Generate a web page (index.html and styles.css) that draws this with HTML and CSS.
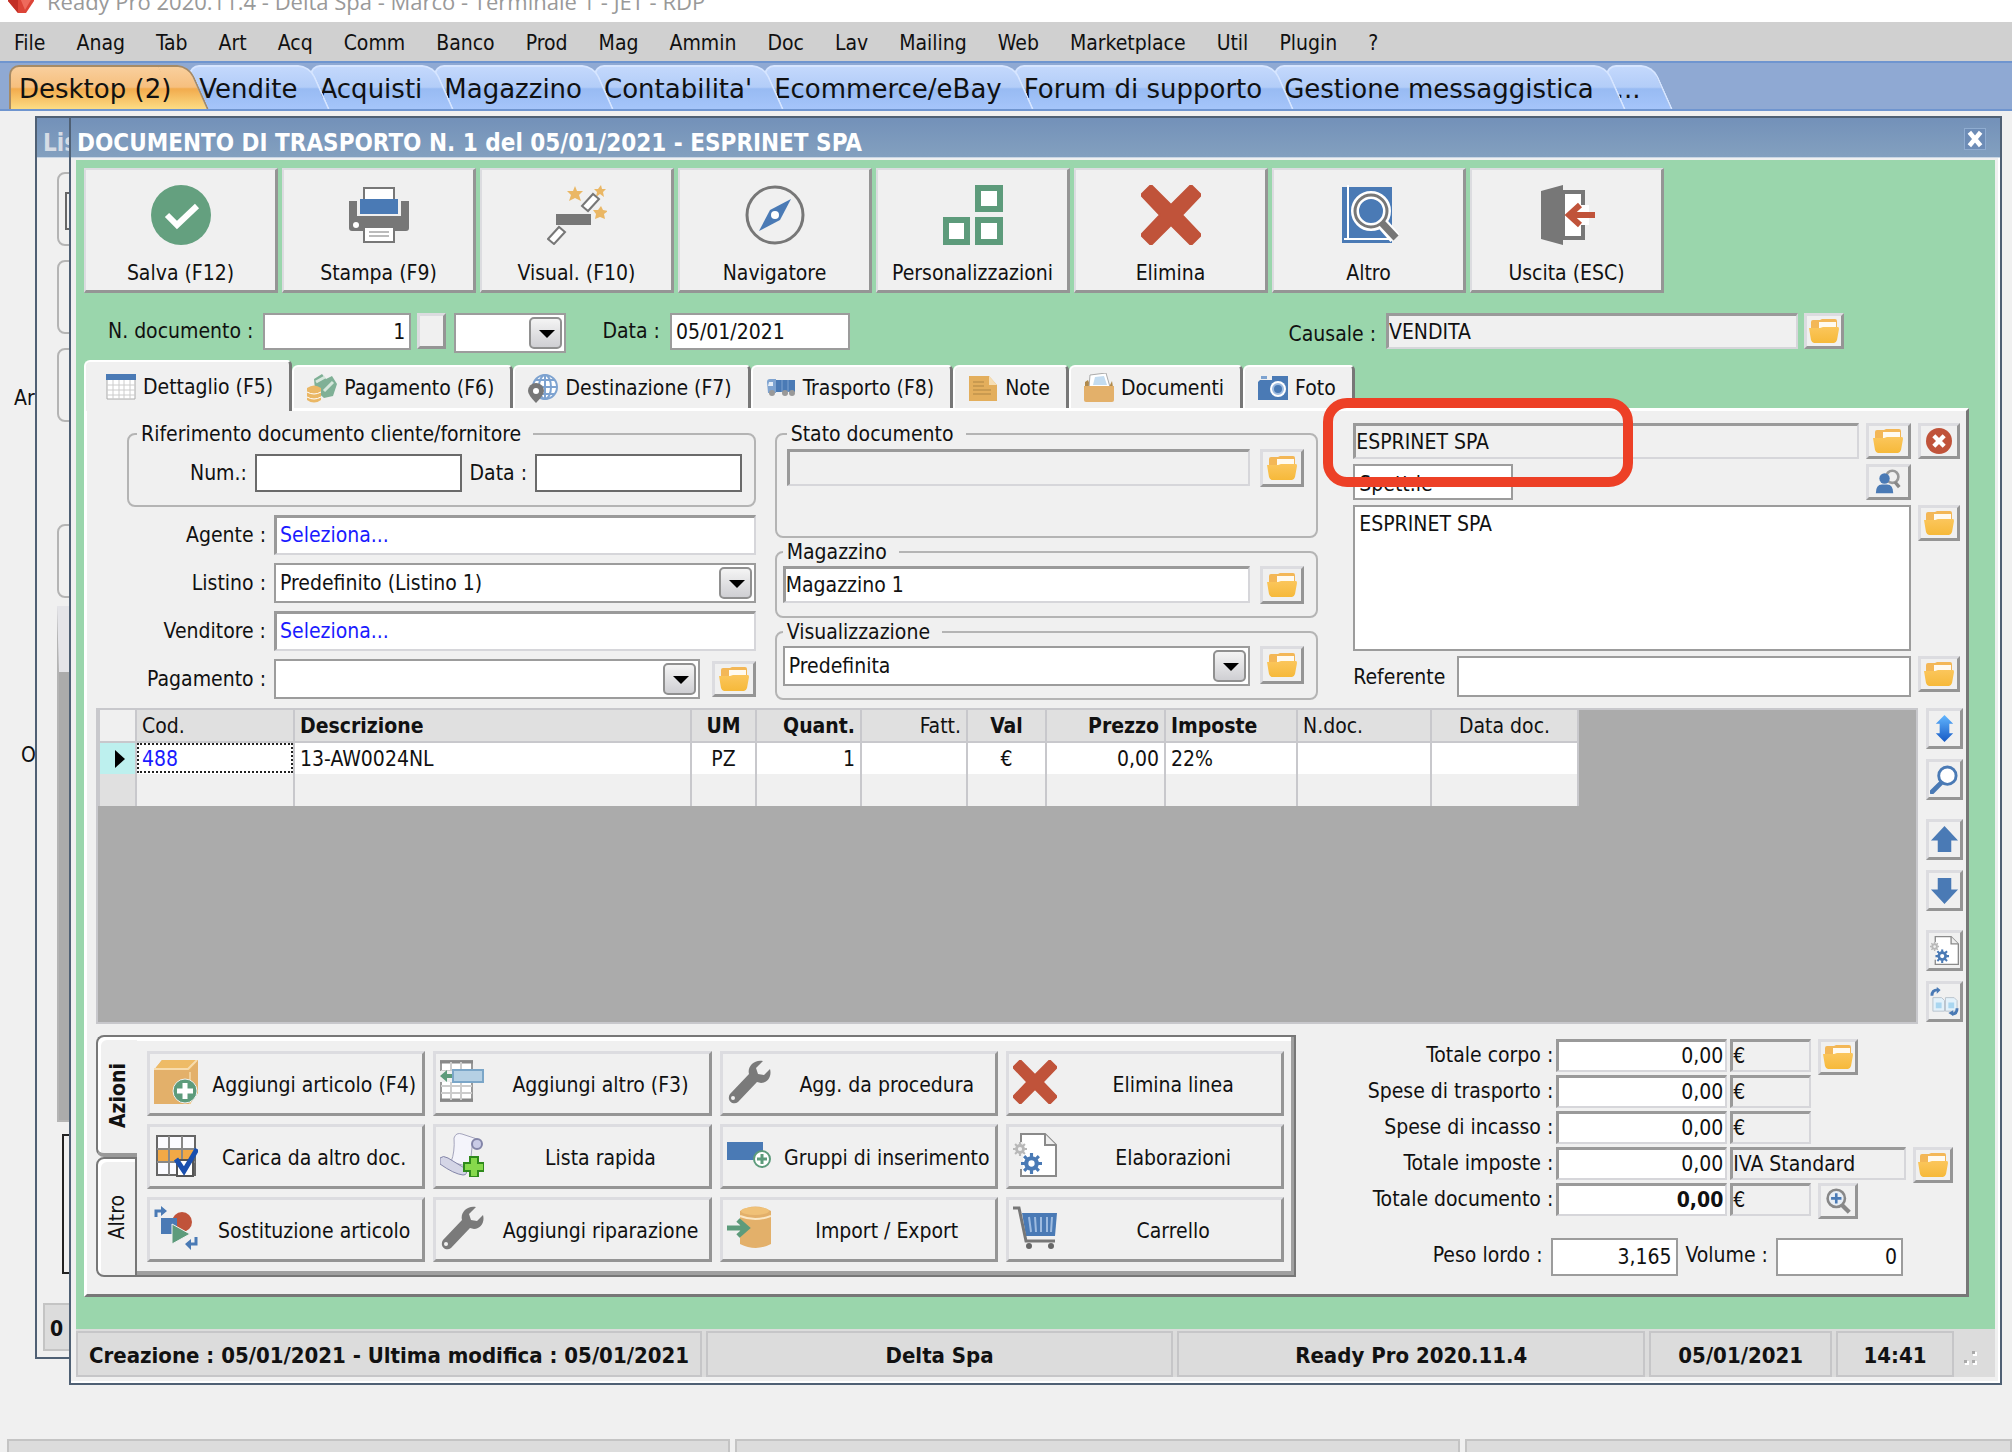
FILE: index.html
```html
<!DOCTYPE html>
<html lang="it">
<head>
    <meta charset="UTF-8">
    <meta name="viewport" content="width=device-width, initial-scale=1.0">
    <title>Ready Pro 2020.11.4</title>
    <link rel="stylesheet" href="styles.css">
</head>
<body>
    <!-- shared icons -->
    <svg class="sprite" aria-hidden="true">
        <defs>
            <linearGradient id="gold" x1="0" y1="0" x2="0" y2="1">
                <stop offset="0" stop-color="#fbc65c"/>
                <stop offset="1" stop-color="#f6b93a"/>
            </linearGradient>
            <linearGradient id="azure" x1="0" y1="0" x2="0" y2="1">
                <stop offset="0" stop-color="#62b6ff"/>
                <stop offset="1" stop-color="#1659c4"/>
            </linearGradient>
        </defs>
        <symbol id="folder" viewBox="0 0 30 24">
            <path d="M2 3q0-2 2-2h7l2-1h13q2 0 2 2v8H2z" fill="#f3b757"/>
            <path d="M10 3h17v8H10z" fill="#fffaf0"/>
            <path d="M0 9h11l3-1h15q1 0 1 2l-2 11q-1 3-3 3H5q-2 0-3-3z" fill="url(#gold)"/>
        </symbol>
        <symbol id="cross" viewBox="0 0 60 60">
            <path d="M10 0L30 20 50 0 60 10 41 30 60 50 50 60 30 40 10 60 0 50 19 30 0 10z" fill="#c0533a" stroke="#c0533a" stroke-width="2" stroke-linejoin="round"/>
        </symbol>
        <symbol id="wrench" viewBox="0 0 44 44">
            <path d="M36 1l-7 7 2 6 6 1 6-6c2 7-2 14-9 14l-4-1L11 42c-5 4-12-2-8-8l19-20C20 7 27-1 36 1z" fill="#7a7a7a"/>
            <circle cx="6" cy="38" r="2" fill="#f0f0f0"/>
        </symbol>
        <symbol id="gear" viewBox="0 0 20 20">
            <circle cx="10" cy="10" r="5" fill="none" stroke="currentColor" stroke-width="4"/>
            <path d="M10 0v4M10 16v4M0 10h4M16 10h4M3 3l3 3M14 14l3 3M17 3l-3 3M6 14l-3 3" stroke="currentColor" stroke-width="3"/>
        </symbol>
        <symbol id="gearpage" viewBox="0 0 44 44">
            <path d="M8 1h24l11 11v31H8z" fill="#fff" stroke="#8a8a8a" stroke-width="2"/>
            <path d="M32 1v11h11" fill="#eee" stroke="#8a8a8a" stroke-width="2"/>
            <path d="M0 9h10v27H0z" fill="#f0f0f0"/>
            <use href="#gear" x="0" y="9" width="14" height="14" color="#b8b8b8"/>
            <use href="#gear" x="8" y="20" width="21" height="21" color="#4a7ab5"/>
        </symbol>
        <symbol id="lens" viewBox="0 0 30 30">
            <path d="M2 28l10-10" stroke="#4a7ab5" stroke-width="5" stroke-linecap="round"/>
            <circle cx="18" cy="11" r="9" fill="#fff" stroke="#4a7ab5" stroke-width="3"/>
        </symbol>
        <symbol id="arrow" viewBox="0 0 30 30">
            <path d="M15 1l14 15h-7v12H8V16H1z" fill="#4a7ab5"/>
        </symbol>
    </svg>

    <header class="titlebar">
        <svg class="gem" viewBox="0 0 28 28"><path d="M1 2h26v13L19 27h-8L1 15z" fill="#dc4437"/><path d="M1 2h10v25L1 15z" fill="#c22f26"/><path d="M13 12h12l-7 12z" fill="#ee6a5c"/></svg>
        <span>Ready Pro 2020.11.4 - Delta Spa - Marco - Terminale 1 - JET - RDP</span>
    </header>

    <nav class="menu">
        <a href="#">File</a><a href="#">Anag</a><a href="#">Tab</a><a href="#">Art</a><a href="#">Acq</a><a href="#">Comm</a><a href="#">Banco</a><a href="#">Prod</a><a href="#">Mag</a><a href="#">Ammin</a><a href="#">Doc</a><a href="#">Lav</a><a href="#">Mailing</a><a href="#">Web</a><a href="#">Marketplace</a><a href="#">Util</a><a href="#">Plugin</a><a href="#">?</a>
    </nav>

    <nav class="areas">
        <a class="active" href="#"><span>Desktop (2)</span></a>
        <a href="#"><span>Vendite</span></a>
        <a href="#"><span>Acquisti</span></a>
        <a href="#"><span>Magazzino</span></a>
        <a href="#"><span>Contabilita'</span></a>
        <a href="#"><span>Ecommerce/eBay</span></a>
        <a href="#"><span>Forum di supporto</span></a>
        <a href="#"><span>Gestione messaggistica</span></a>
        <a href="#"><span>...</span></a>
    </nav>

    <main class="desktop">
        <span class="behind behind-top">Ar</span>
        <span class="behind behind-low">O</span>

        <!-- list window, mostly covered -->
        <section class="window back">
            <h2 class="caption">Lis</h2>
            <div class="back-body">
                <div class="group"><i></i></div>
                <div class="group"></div>
                <div class="group last"></div>
                <div class="group"></div>
                <div class="back-grid"></div>
                <div class="back-box"></div>
            </div>
            <div class="back-status">0</div>
        </section>

        <section class="window front">
            <header class="caption">
                <h1>DOCUMENTO DI TRASPORTO N. 1 del 05/01/2021 - ESPRINET SPA</h1>
                <button class="close" type="button" aria-label="Chiudi"><svg viewBox="0 0 16 16"><path d="M3 2l10 12M13 2L3 14" stroke="#fff" stroke-width="4"/></svg></button>
            </header>

            <form class="content">
                <div class="toolbar">
                    <button type="button">
                        <svg viewBox="0 0 60 60"><circle cx="30" cy="30" r="30" fill="#64a07f"/><path d="M16 30l10 10 20-19" fill="none" stroke="#fff" stroke-width="6"/></svg>
                        <span>Salva (F12)</span>
                    </button>
                    <button type="button">
                        <svg viewBox="0 0 60 60"><path d="M0 16h60v27q0 3-3 3H3q-3 0-3-3z" fill="#777"/><path d="M15 3h30v20H15z" fill="#fff" stroke="#777" stroke-width="2"/><path d="M8 14h44v17H8z" fill="#f0f0f0"/><path d="M15 3h30v14H15z" fill="#fff" stroke="#777" stroke-width="2"/><path d="M11 14h38v15H11z" fill="#4a7ab5"/><circle cx="7" cy="40" r="3" fill="#fff"/><path d="M15 42h30v15H15z" fill="#fff" stroke="#777" stroke-width="2"/><path d="M20 47h20M20 51h20" stroke="#bbb" stroke-width="2"/></svg>
                        <span>Stampa (F9)</span>
                    </button>
                    <button type="button">
                        <svg viewBox="0 0 60 60"><path d="M28 1l2 5 6 0-4 4 2 6-6-3-6 3 2-6-4-4 6 0zM54 0l1 4 4 0-3 3 1 5-4-3-4 3 1-5-3-3 4 0zM54 21l2 4 5 1-4 3 1 5-5-2-5 2 1-5-3-4 5 0z" fill="#eab765"/><path d="M9 29h35v11H9z" fill="#777"/><path d="M35 21l11-12 6 5-11 12zM1 54l11-12 6 5L7 59z" fill="#fff" stroke="#777" stroke-width="2"/></svg>
                        <span>Visual. (F10)</span>
                    </button>
                    <button type="button">
                        <svg viewBox="0 0 60 60"><circle cx="30" cy="30" r="28" fill="#f0f0f0" stroke="#777" stroke-width="3"/><path d="M46 14L35 35 14 46 25 25z" fill="#4a7ab5"/><circle cx="30" cy="30" r="4" fill="#fff"/></svg>
                        <span>Navigatore</span>
                    </button>
                    <button type="button">
                        <svg viewBox="0 0 60 60"><path d="M35 3h22v21H35zM3 35h21v22H3zM35 35h22v22H35z" fill="#fff" stroke="#5d9b7b" stroke-width="6"/></svg>
                        <span>Personalizzazioni</span>
                    </button>
                    <button type="button">
                        <svg><use href="#cross"/></svg>
                        <span>Elimina</span>
                    </button>
                    <button type="button">
                        <svg viewBox="0 0 60 60"><path d="M3 2h50v56H3z" fill="#4a7ab5"/><path d="M9 0v53M5 54h45" stroke="#fff" stroke-width="2"/><path d="M42 37l14 16" stroke="#fff" stroke-width="12"/><circle cx="32" cy="26" r="16" fill="#4a7ab5" stroke="#fff" stroke-width="8"/><circle cx="32" cy="26" r="16" fill="none" stroke="#777" stroke-width="3"/><path d="M43 38l14 15" stroke="#777" stroke-width="7"/></svg>
                        <span>Altro</span>
                    </button>
                    <button type="button">
                        <svg viewBox="0 0 60 60"><path d="M26 7h20v46H26z" fill="#fff" stroke="#777" stroke-width="4"/><path d="M4 6L26 0v60L4 54z" fill="#777"/><path d="M42 20h10v20H42z" fill="#fff"/><path d="M32 30h26M43 20L32 30l11 10" fill="none" stroke="#c0533a" stroke-width="6"/></svg>
                        <span>Uscita (ESC)</span>
                    </button>
                </div>

                <div class="docline">
                    <label for="numdoc">N. documento :</label>
                    <input class="plain num" id="numdoc" value="1">
                    <button class="raised blank" type="button" aria-label="Numero"></button>
                    <div class="combo serie"><select aria-label="Serie"><option></option></select></div>
                    <label for="datadoc">Data :</label>
                    <input class="plain date" id="datadoc" value="05/01/2021">
                    <label class="causale-label" for="causale">Causale :</label>
                    <input class="sunken gray causale" id="causale" value="VENDITA">
                    <button class="raised folder" type="button" aria-label="Apri causale"><svg><use href="#folder"/></svg></button>
                </div>

                <nav class="doctabs">
                    <a class="active" href="#"><svg viewBox="0 0 30 26"><path d="M1 1h28v24H1z" fill="#fff" stroke="#aaa"/><path d="M0 0h30v6H0z" fill="#4a7ab5"/><path d="M7 6v19M13 6v19M18 6v19M24 6v19M1 11h28M1 16h28M1 21h28" stroke="#ccc"/></svg>Dettaglio (F5)</a>
                    <a href="#"><svg viewBox="0 0 30 30"><path d="M7 6l8-5 4 5 6-3 5 8-4 12-9 2-9-8z" fill="#7fb096"/><path d="M9 9l9-5M17 18l9-9" stroke="#d5e7dc" stroke-width="3"/><path d="M0 15q7-5 14 0v12q-7 5-14 0z" fill="#eab765"/><path d="M0 19q7 4 14 0M0 24q7 4 14 0" stroke="#fff" fill="none"/></svg>Pagamento (F6)</a>
                    <a href="#"><svg viewBox="0 0 30 30"><circle cx="17" cy="14" r="12" fill="#fff" stroke="#7ea3d0" stroke-width="2"/><path d="M17 2v24M5 14h24M8 7h18M8 21h18" stroke="#7ea3d0" stroke-width="2"/><ellipse cx="17" cy="14" rx="6" ry="12" fill="none" stroke="#7ea3d0" stroke-width="2"/><path d="M0 18a8 8 0 0 1 16 0q0 4-8 12-8-8-8-12z" fill="#777"/><circle cx="8" cy="18" r="3" fill="#fff"/></svg>Destinazione (F7)</a>
                    <a href="#"><svg viewBox="0 0 30 30"><path d="M10 7h19v12H10z" fill="#4a7ab5"/><path d="M1 9q0-3 3-3h6v14H2z" fill="#7ea3d0"/><path d="M3 9h4v4H2z" fill="#e4edf7"/><path d="M16 7v12M22 7v12" stroke="#7ea3d0"/><circle cx="6" cy="20" r="3" fill="#999"/><circle cx="19" cy="20" r="3" fill="#999"/><circle cx="26" cy="20" r="3" fill="#999"/></svg>Trasporto (F8)</a>
                    <a href="#"><svg viewBox="0 0 30 30"><path d="M1 3h20l8 9v16H1z" fill="#e3ae5c"/><path d="M21 3v9h8" fill="#f6deb4"/><path d="M5 9h11M5 13h11M5 17h18M5 21h18" stroke="#c99a50" stroke-width="2"/></svg>Note</a>
                    <a href="#"><svg viewBox="0 0 30 30"><path d="M1 9l3-2 2 5h20l2-4 1 6H1z" fill="#b08a4c"/><path d="M6 2l16-2 4 14H5z" fill="#fff" stroke="#aaa"/><path d="M11 4l9-1 3 9H9z" fill="#c3dcf0"/><path d="M0 13h30v14q0 2-2 2H2q-2 0-2-2z" fill="#e3b06a"/></svg>Documenti</a>
                    <a href="#"><svg viewBox="0 0 30 30"><path d="M2 7h12V3h16v24H0V9z" fill="#4a7ab5"/><path d="M3 3h6v3H3z" fill="#7ea3d0"/><circle cx="20" cy="16" r="8" fill="#fff"/><circle cx="20" cy="16" r="5" fill="#4a7ab5" stroke="#9dbbe0" stroke-width="2"/></svg>Foto</a>
                </nav>

                <div class="panel">
                    <div class="columns">
                        <div class="refs">
                            <fieldset>
                                <legend>Riferimento documento cliente/fornitore</legend>
                                <div class="refline">
                                    <label for="refnum">Num.:</label>
                                    <input class="plain dark" id="refnum">
                                    <label for="refdata">Data :</label>
                                    <input class="plain dark" id="refdata">
                                </div>
                            </fieldset>
                            <div class="row">
                                <label for="agente">Agente :</label>
                                <input class="sunken pick" id="agente" value="Seleziona...">
                            </div>
                            <div class="row">
                                <label for="listino">Listino :</label>
                                <div class="combo"><select id="listino"><option>Predefinito (Listino 1)</option></select></div>
                            </div>
                            <div class="row">
                                <label for="venditore">Venditore :</label>
                                <input class="sunken pick" id="venditore" value="Seleziona...">
                            </div>
                            <div class="row">
                                <label for="pagamento">Pagamento :</label>
                                <div class="combo"><select id="pagamento"><option></option></select></div>
                                <button class="raised folder wide" type="button" aria-label="Apri pagamento"><svg><use href="#folder"/></svg></button>
                            </div>
                        </div>

                        <div class="state">
                            <fieldset class="tall">
                                <legend>Stato documento</legend>
                                <div class="stateline">
                                    <input class="sunken gray" aria-label="Stato documento">
                                    <button class="raised folder wide" type="button" aria-label="Apri stato"><svg><use href="#folder"/></svg></button>
                                </div>
                            </fieldset>
                            <fieldset>
                                <legend>Magazzino</legend>
                                <div class="stateline">
                                    <input class="sunken flush" aria-label="Magazzino" value="Magazzino 1">
                                    <button class="raised folder wide" type="button" aria-label="Apri magazzino"><svg><use href="#folder"/></svg></button>
                                </div>
                            </fieldset>
                            <fieldset>
                                <legend>Visualizzazione</legend>
                                <div class="stateline">
                                    <div class="combo"><select aria-label="Visualizzazione"><option>Predefinita</option></select></div>
                                    <button class="raised folder wide" type="button" aria-label="Apri visualizzazione"><svg><use href="#folder"/></svg></button>
                                </div>
                            </fieldset>
                        </div>

                        <div class="party">
                            <input class="sunken gray flush" aria-label="Cliente" value="ESPRINET SPA">
                            <button class="raised folder" type="button" aria-label="Apri cliente"><svg><use href="#folder"/></svg></button>
                            <button class="raised folder" type="button" aria-label="Rimuovi cliente"><svg viewBox="0 0 30 30"><circle cx="15" cy="15" r="15" fill="#c0533a"/><path d="M9 9l12 12M21 9L9 21" stroke="#fff" stroke-width="5"/></svg></button>
                            <input class="plain title" aria-label="Titolo" value="Spett.le">
                            <button class="raised folder" type="button" aria-label="Cerca cliente"><svg viewBox="0 0 30 30"><circle cx="20" cy="9" r="7" fill="#f0f0f0" stroke="#999" stroke-width="3"/><path d="M23 15l5 6" stroke="#888" stroke-width="4"/><circle cx="11" cy="11" r="6" fill="#4a7ab5"/><path d="M1 28q0-10 7-10h6q7 0 7 10z" fill="#4a7ab5"/></svg></button>
                            <textarea class="plain" aria-label="Intestazione">ESPRINET SPA</textarea>
                            <button class="raised folder open-heading" type="button" aria-label="Apri intestazione"><svg><use href="#folder"/></svg></button>
                            <div class="referente">
                                <label for="referente">Referente</label>
                                <input class="plain" id="referente">
                            </div>
                            <button class="raised folder open-contact" type="button" aria-label="Apri referente"><svg><use href="#folder"/></svg></button>
                            <div class="highlight"></div>
                        </div>
                    </div>

                    <div class="lines">
                        <div class="grid">
                            <table>
                                <colgroup><col class="c-mark"><col class="c-cod"><col class="c-desc"><col class="c-um"><col class="c-qta"><col class="c-fatt"><col class="c-val"><col class="c-prezzo"><col class="c-imp"><col class="c-ndoc"><col class="c-data"></colgroup>
                                <thead>
                                    <tr><th></th><th class="light">Cod.</th><th>Descrizione</th><th class="mid">UM</th><th class="right">Quant.</th><th class="light right">Fatt.</th><th class="mid">Val</th><th class="right">Prezzo</th><th>Imposte</th><th class="light">N.doc.</th><th class="light mid">Data doc.</th></tr>
                                </thead>
                                <tbody>
                                    <tr><td class="mark"></td><td class="cell-active"><a href="#">488</a></td><td>13-AW0024NL</td><td class="mid">PZ</td><td class="right">1</td><td></td><td class="mid">€</td><td class="right">0,00</td><td>22%</td><td></td><td></td></tr>
                                    <tr class="empty"><td></td><td></td><td></td><td></td><td></td><td></td><td></td><td></td><td></td><td></td><td></td></tr>
                                </tbody>
                            </table>
                        </div>
                        <div class="side">
                            <button class="raised" type="button" aria-label="Altezza righe"><svg viewBox="0 0 30 30"><path d="M15 1l9 9h-4v10h4l-9 9-9-9h4V10H6z" fill="url(#azure)"/></svg></button>
                            <button class="raised" type="button" aria-label="Cerca"><svg><use href="#lens"/></svg></button>
                            <button class="raised spaced" type="button" aria-label="Sposta su"><svg><use href="#arrow"/></svg></button>
                            <button class="raised" type="button" aria-label="Sposta giù"><svg class="flip"><use href="#arrow"/></svg></button>
                            <button class="raised spaced" type="button" aria-label="Elabora"><svg><use href="#gearpage"/></svg></button>
                            <button class="raised" type="button" aria-label="Scambia"><svg viewBox="0 0 30 30"><path d="M3 11h9l3 3v11H3zM16 11h9l3 3v11H16z" fill="#e3f1fa" stroke="#b9c3cc"/><path d="M6 16h6v6H6zM19 16h6v6h-6z" fill="#a9d6f0"/><path d="M2 9q0-6 6-6M28 22q0 6-5 6" fill="none" stroke="#4a7ab5" stroke-width="3"/><path d="M7 0l4 3-4 4zM24 24v6l-5-3z" fill="#4a7ab5"/></svg></button>
                        </div>
                    </div>

                    <div class="bottom">
                        <div class="actions">
                            <div class="vtabs">
                                <a class="active" href="#"><span>Azioni</span></a>
                                <a href="#"><span>Altro</span></a>
                            </div>
                            <div class="buttons">
                                <button class="raised" type="button">
                                    <svg viewBox="0 0 44 44"><path d="M0 10L8 0h36v33l-8 11H0z" fill="#e3b06a"/><path d="M0 10L8 0h36l-8 10z" fill="#eebb66"/><path d="M0 9h34l9-9" fill="none" stroke="#f7dcae" stroke-width="2"/><path d="M36 12v32" stroke="#f2cf97" stroke-width="2"/><circle cx="31" cy="31" r="12" fill="#5d9b7b" stroke="#f0f0f0"/><path d="M31 23v16M23 31h16" stroke="#fff" stroke-width="5"/></svg>
                                    <span>Aggiungi articolo (F4)</span>
                                </button>
                                <button class="raised" type="button">
                                    <svg viewBox="0 0 44 44"><path d="M1 1h31v40H1z" fill="#fff" stroke="#999" stroke-width="2"/><path d="M0 2h33M0 40h33" stroke="#888" stroke-width="3"/><path d="M11 2v38M21 2v38M1 11h31M1 26h31M1 33h31" stroke="#ccc" stroke-width="2"/><path d="M0 11h13v11H0z" fill="#f0f0f0"/><path d="M13 10h30v12H13z" fill="#b5d0e4" stroke="#7ba6c8" stroke-width="2"/><path d="M0 16l7-6v4h5v4H7v4z" fill="#5d9b7b"/></svg>
                                    <span>Aggiungi altro (F3)</span>
                                </button>
                                <button class="raised" type="button">
                                    <svg><use href="#wrench"/></svg>
                                    <span>Agg. da procedura</span>
                                </button>
                                <button class="raised" type="button">
                                    <svg><use href="#cross"/></svg>
                                    <span>Elimina linea</span>
                                </button>
                                <button class="raised" type="button">
                                    <svg viewBox="0 0 44 44"><path d="M3 3h38v39H3z" fill="#fbfbff" stroke="#666" stroke-width="2"/><path d="M4 16h36v13H4z" fill="#f2a946"/><path d="M15 3v39M28 3v39M3 16h38M3 29h38" stroke="#888" stroke-width="2"/><path d="M23 27h16v16H23z" fill="#fff" stroke="#555" stroke-width="2"/><path d="M22 26l8 12L43 16" fill="none" stroke="#1a4fae" stroke-width="5"/></svg>
                                    <span>Carica da altro doc.</span>
                                </button>
                                <button class="raised" type="button">
                                    <svg viewBox="0 0 44 44"><path d="M14 5q2-6 8-4l15 5q-5 2-5 8l-2 20-19-5q4-10 3-24z" fill="#f4f4fb" stroke="#a4a4bc"/><circle cx="37" cy="11" r="5" fill="#c9cbe6" stroke="#8385a8" stroke-width="2"/><path d="M0 25q3-3 8 0l18 11q2 6-3 6Q14 41 0 31z" fill="#d4d5e6" stroke="#8385a8"/><path d="M30 24h8v6h6v8h-6v6h-8v-6h-6v-8h6z" fill="#86d94c" stroke="#2f8a1c" stroke-width="2"/></svg>
                                    <span>Lista rapida</span>
                                </button>
                                <button class="raised" type="button">
                                    <svg viewBox="0 0 44 44"><path d="M0 9h36v18H0z" fill="#4a7ab5"/><circle cx="35" cy="26" r="8" fill="#fff" stroke="#5d9b7b" stroke-width="2"/><path d="M35 21v10M30 26h10" stroke="#5d9b7b" stroke-width="3"/></svg>
                                    <span>Gruppi di inserimento</span>
                                </button>
                                <button class="raised" type="button">
                                    <svg><use href="#gearpage"/></svg>
                                    <span>Elaborazioni</span>
                                </button>
                                <button class="raised" type="button">
                                    <svg viewBox="0 0 44 44"><circle cx="28" cy="16" r="10" fill="#c0533a"/><path d="M7 12h16v16H7z" fill="#4a7ab5"/><path d="M18 18l18 10-18 10z" fill="#5d9b7b" stroke="#f0f0f0"/><path d="M2 11V5h6M42 31v7h-6" fill="none" stroke="#4a7ab5" stroke-width="3"/><path d="M7 0l6 5-6 5zM37 33v11l-6-6z" fill="#4a7ab5"/></svg>
                                    <span>Sostituzione articolo</span>
                                </button>
                                <button class="raised" type="button">
                                    <svg><use href="#wrench"/></svg>
                                    <span>Aggiungi riparazione</span>
                                </button>
                                <button class="raised" type="button">
                                    <svg viewBox="0 0 44 44"><path d="M13 5q15-9 31 0v33q-15 8-31 0z" fill="#e3b06a"/><ellipse cx="28" cy="5" rx="14" ry="4" fill="#f0c177"/><path d="M13 10q15 6 31 0" fill="none" stroke="#fbe8c6" stroke-width="2"/><path d="M0 22h18M11 14l9 8-9 8" fill="none" stroke="#5d9b7b" stroke-width="5"/></svg>
                                    <span>Import / Export</span>
                                </button>
                                <button class="raised" type="button">
                                    <svg viewBox="0 0 44 44"><path d="M9 7h35l-2 23H13z" fill="#4a7ab5"/><path d="M16 11l2 15M22 11l1 15M28 11v15M34 11v15M39 11l-1 15" stroke="#9dbbe0" stroke-width="2"/><path d="M0 2h6l7 33h29" fill="none" stroke="#777" stroke-width="3"/><circle cx="16" cy="40" r="3" fill="#666"/><circle cx="38" cy="40" r="3" fill="#666"/></svg>
                                    <span>Carrello</span>
                                </button>
                            </div>
                        </div>

                        <div class="totals">
                            <div class="total">
                                <label for="corpo">Totale corpo :</label>
                                <input class="sunken amount" id="corpo" value="0,00">
                                <input class="sunken gray flush unit" aria-label="Valuta corpo" value="€">
                                <button class="raised folder" type="button" aria-label="Apri totale corpo"><svg><use href="#folder"/></svg></button>
                            </div>
                            <div class="total">
                                <label for="trasp">Spese di trasporto :</label>
                                <input class="sunken amount" id="trasp" value="0,00">
                                <input class="sunken gray flush unit" aria-label="Valuta trasporto" value="€">
                            </div>
                            <div class="total">
                                <label for="incasso">Spese di incasso :</label>
                                <input class="sunken amount" id="incasso" value="0,00">
                                <input class="sunken gray flush unit" aria-label="Valuta incasso" value="€">
                            </div>
                            <div class="total">
                                <label for="imposte">Totale imposte :</label>
                                <input class="sunken amount" id="imposte" value="0,00">
                                <input class="sunken gray flush unit vat" aria-label="Tipo IVA" value="IVA Standard">
                                <button class="raised folder" type="button" aria-label="Apri imposte"><svg><use href="#folder"/></svg></button>
                            </div>
                            <div class="total">
                                <label for="totdoc">Totale documento :</label>
                                <input class="sunken amount strong" id="totdoc" value="0,00">
                                <input class="sunken gray flush unit" aria-label="Valuta documento" value="€">
                                <button class="raised folder" type="button" aria-label="Dettaglio totale"><svg viewBox="0 0 30 30"><path d="M19 19l9 9" stroke="#888" stroke-width="5"/><circle cx="13" cy="12" r="10" fill="#e8eef5" stroke="#888" stroke-width="3"/><path d="M13 6v12M7 12h12" stroke="#4a7ab5" stroke-width="3"/></svg></button>
                            </div>
                            <div class="weights">
                                <label for="peso">Peso lordo :</label>
                                <input class="plain" id="peso" value="3,165">
                                <label for="volume">Volume :</label>
                                <input class="plain" id="volume" value="0">
                            </div>
                        </div>
                    </div>
                </div>
            </form>

            <footer class="status">
                <span class="s-created">Creazione : 05/01/2021 - Ultima modifica : 05/01/2021</span>
                <span class="s-firm">Delta Spa</span>
                <span class="s-app">Ready Pro 2020.11.4</span>
                <span class="s-date">05/01/2021</span>
                <span class="s-time">14:41</span>
                <svg class="grip" viewBox="0 0 20 20"><path d="M2 12h4v4H2zM10 12h4v4h-4zM10 3h4v4h-4z" fill="#fff"/><path d="M1 11h3v3H1zM9 11h3v3H9zM9 2h3v3H9z" fill="#aaa"/></svg>
            </footer>
        </section>
    </main>

    <footer class="appstatus">
        <span></span>
        <span></span>
        <span></span>
    </footer>
</body>
</html>
```

FILE: styles.css
```css
* {
    box-sizing: border-box;
}

body {
    margin: 0;
    height: 100vh;
    display: flex;
    flex-direction: column;
    overflow: hidden;
    background-color: #f0f0f0;
    color: #111;
    font-family: "DejaVu Sans Condensed", "DejaVu Sans", sans-serif;
    font-size: 21px;
    line-height: 24px;
}

a {
    color: inherit;
    text-decoration: none;
}

button, input, select, textarea {
    font: inherit;
    color: inherit;
    margin: 0;
    border-radius: 0;
    min-width: 0;
}

button {
    padding: 0;
    background-color: #f0f0f0;
}

label {
    white-space: nowrap;
}

svg {
    display: block;
}

.sprite {
    position: absolute;
    width: 0;
    height: 0;
}

/* application frame */
.titlebar {
    flex: none;
    display: flex;
    gap: 12px;
    height: 22px;
    padding-left: 7px;
    overflow: hidden;
    background-color: #fff;
    color: #999;
    font-family: "Open Sans", sans-serif;
    font-size: 22px;
    line-height: 2px;
    white-space: nowrap;
}

.gem {
    flex: none;
    width: 28px;
    height: 28px;
    margin-top: -14px;
}

.menu {
    flex: none;
    display: flex;
    gap: 31px;
    height: 39px;
    padding: 9px 14px 6px;
    background-color: #d0d0d0;
}

.areas {
    flex: none;
    display: flex;
    align-items: flex-end;
    height: 50px;
    padding-left: 9px;
    border-top: 2px solid #6f95cf;
    border-bottom: 2px solid #6f95cf;
    background-color: #8fa9d3;
    font-family: "DejaVu Sans", sans-serif;
    font-size: 26px;
}

.areas a {
    position: relative;
    height: 44px;
    padding: 12px 12px 0 10px;
    white-space: nowrap;
}

.areas span {
    position: relative;
    z-index: 1;
}

.areas a::before,
.areas a::after {
    content: "";
    position: absolute;
    top: 0;
    bottom: 0;
    background: linear-gradient(#c3d8fc, #b3cdf8 48%, #98bbf3 52%, #a5c5fa);
    border-top: 2px solid #d6e5ff;
}

.areas a::before {
    left: 0;
    right: 12px;
    border-left: 2px solid #d6e5ff;
    border-radius: 10px 0 0 0;
}

.areas a::after {
    right: -10px;
    width: 30px;
    border-right: 2px solid #d6e5ff;
    border-radius: 0 12px 0 0;
    transform: skewX(24deg);
}

.areas .active {
    padding-right: 18px;
}

.areas .active::before,
.areas .active::after {
    background: linear-gradient(#f9cf9d, #f6bf7e 48%, #f2ab4d 52%, #fcdc84);
    border-color: #a58a66;
}

.areas a:nth-child(1) { z-index: 9; }
.areas a:nth-child(2) { z-index: 8; }
.areas a:nth-child(3) { z-index: 7; }
.areas a:nth-child(4) { z-index: 6; }
.areas a:nth-child(5) { z-index: 5; }
.areas a:nth-child(6) { z-index: 4; }
.areas a:nth-child(7) { z-index: 3; }
.areas a:nth-child(8) { z-index: 2; }
.areas a:nth-child(9) { z-index: 1; }

.desktop {
    position: relative;
    flex: 1;
    min-height: 0;
}

.behind {
    position: absolute;
    left: 14px;
}

.behind-top {
    top: 275px;
}

.behind-low {
    top: 632px;
    left: 21px;
}

.appstatus {
    flex: none;
    display: grid;
    grid-template-columns: 723fr 726fr 547fr;
    gap: 5px;
    height: 13px;
    padding-left: 7px;
}

.appstatus span {
    border: 2px solid #c4c4c4;
    border-bottom: 0;
    background-color: #dcdcdc;
}

/* windows on the desktop */
.window {
    position: absolute;
    top: 5px;
    display: flex;
    flex-direction: column;
    border: 2px solid #4f6074;
    background-color: #f0f0f0;
}

.caption {
    flex: none;
    display: flex;
    align-items: center;
    justify-content: space-between;
    height: 40px;
    margin: 0;
    padding: 10px 14px 0 6px;
    background: linear-gradient(#7391b9, #83a0bf);
    border-bottom: 1px solid #c9d6e4;
    color: #fff;
    font-weight: bold;
    font-size: 24px;
}

.caption h1 {
    margin: 0;
    font-size: 24px;
}

.close {
    width: 22px;
    height: 22px;
    margin-bottom: 8px;
    padding: 1px;
    border: 1px solid #8facd0;
    background-color: #6d8cb6;
}

.back {
    left: 35px;
    right: 200px;
    bottom: 80px;
}

.back .caption {
    justify-content: flex-start;
    color: #d5dce5;
}

.back-body {
    flex: 1;
    display: flex;
    flex-direction: column;
    padding: 14px 20px;
}

.group {
    height: 74px;
    margin-bottom: 14px;
    border: 2px solid #b4b4b4;
    border-radius: 8px;
}

.group.last {
    margin-bottom: 102px;
}

.group i {
    display: block;
    width: 20px;
    height: 38px;
    margin: 18px 0 0 6px;
    border: 2px solid #666;
}

.back-grid {
    height: 516px;
    margin-top: -6px;
    border: 2px solid #b4b4b4;
    border-top: 66px solid #e4e4e8;
    background-color: #ababab;
}

.back-box {
    height: 140px;
    margin: 12px 0 0 5px;
    border: 2px solid #222;
}

.back-status {
    height: 48px;
    margin: 6px;
    padding: 12px 5px 0;
    border: 2px solid #c4c4c4;
    background-color: #dcdcdc;
    font-weight: bold;
}

.front {
    left: 69px;
    right: 10px;
    box-shadow: inset -2px -2px 0 #fff;
}

.content {
    margin: 2px 5px 0;
    padding: 8px 26px 32px 8px;
    background-color: #9ad6ac;
}

/* controls */
.raised {
    display: flex;
    align-items: center;
    justify-content: center;
    border: 3px solid;
    border-color: #dcdce0 #959595 #959595 #dcdce0;
}

.folder {
    width: 40px;
    height: 36px;
}

.folder svg {
    width: 30px;
    height: 26px;
}

.wide {
    width: 44px;
}

.plain {
    border: 2px solid #9c9c9c;
    background-color: #fff;
    padding: 2px 4px;
}

.dark {
    border-color: #6a6a6a;
}

.sunken {
    border: 2px solid #d6d6da;
    border-top: 3px solid #9a9a9a;
    border-left: 3px solid #9a9a9a;
    background-color: #fff;
    padding: 0 3px;
}

.flush {
    padding: 0;
}

.gray {
    background-color: #f0f0f0;
}

.pick {
    color: #1a1aff;
}

.combo {
    position: relative;
    flex: 1;
    height: 40px;
}

.combo select {
    appearance: none;
    width: 100%;
    height: 100%;
    padding: 0 40px 0 4px;
    border: 2px solid #9c9c9c;
    background-color: #fff;
}

.combo::before,
.combo::after {
    content: "";
    position: absolute;
    pointer-events: none;
}

.combo::before {
    top: 4px;
    bottom: 4px;
    right: 4px;
    width: 29px;
    border: 2px solid #909090;
    border-radius: 5px;
    background: linear-gradient(#f4f4f4, #cfcfd3);
}

.combo::after {
    right: 11px;
    top: 17px;
    border: 8px solid transparent;
    border-top-color: #000;
    border-bottom: 0;
}

/* document header */
.toolbar {
    display: flex;
    gap: 4px;
}

.toolbar button {
    flex: 0 1 194px;
    display: flex;
    flex-direction: column;
    align-items: center;
    gap: 16px;
    height: 125px;
    padding-top: 15px;
    border: 2px solid;
    border-color: #dcdce0 #959595 #959595 #dcdce0;
    border-right-width: 3px;
    border-bottom-width: 3px;
}

.toolbar svg {
    width: 60px;
    height: 60px;
    flex: none;
}

.docline {
    display: flex;
    margin: 20px 125px 0 24px;
    height: 40px;
}

.docline label {
    margin: 6px 10px 0 0;
}

.docline .plain {
    height: 37px;
}

.num {
    width: 148px;
    text-align: right;
}

.blank {
    width: 29px;
    height: 36px;
    margin: 0 8px 0 6px;
}

.docline .serie {
    flex: 0 0 112px;
    margin-right: 36px;
}

.date {
    width: 180px;
}

.docline .causale-label {
    margin: 9px 10px 0 auto;
}

.causale {
    width: 412px;
    height: 36px;
    margin-right: 6px;
    padding: 0;
}

.doctabs {
    display: flex;
    align-items: flex-end;
    height: 55px;
    padding-top: 7px;
}

.doctabs a {
    display: flex;
    align-items: center;
    gap: 7px;
    height: 43px;
    padding: 0 16px 0 13px;
    border: 2px solid #fff;
    border-bottom: 0;
    border-right: 3px solid #777;
    border-radius: 6px 5px 0 0;
    background-color: #f0f0f0;
    white-space: nowrap;
}

.doctabs svg {
    width: 30px;
    height: 30px;
}

.doctabs .active {
    height: 51px;
    margin-bottom: -3px;
    padding-left: 20px;
}

.panel {
    padding: 11px 3px 17px 9px;
    border: 3px solid #fff;
    border-right-color: #777;
    border-bottom-color: #777;
    background-color: #f0f0f0;
}

.panel fieldset {
    margin: 0;
    min-width: 0;
    border: 2px solid #b4b4b4;
    border-radius: 8px;
}

.panel legend {
    padding: 0 12px 0 4px;
}

.columns {
    display: grid;
    grid-template-columns: minmax(0, 628fr) minmax(0, 543fr) minmax(0, 625fr);
    column-gap: 19px;
    margin-left: 31px;
}

.refs {
    display: flex;
    flex-direction: column;
    gap: 7px;
}

.refs fieldset {
    height: 85px;
    padding: 8px 12px 0 8px;
}

.refline {
    display: flex;
    align-items: center;
    gap: 8px;
    padding-left: 53px;
}

.refline .plain {
    flex: 1;
    height: 38px;
}

.row {
    display: flex;
    align-items: center;
    height: 41px;
}

.row label {
    flex: 0 0 139px;
    margin-right: 8px;
    text-align: right;
}

.row .sunken {
    flex: 1;
    height: 40px;
}

.row .wide {
    margin-left: 12px;
}

.state {
    display: flex;
    flex-direction: column;
    gap: 2px;
}

.state fieldset {
    height: 78px;
    padding: 2px 12px 0 6px;
}

.state fieldset:last-child {
    height: 80px;
}

.state .tall {
    height: 116px;
    padding-top: 3px;
    padding-left: 10px;
}

.stateline {
    display: flex;
    gap: 10px;
}

.stateline .sunken {
    flex: 1;
    height: 37px;
}

.stateline .wide {
    height: 38px;
}

.party {
    position: relative;
    display: grid;
    grid-template-columns: 1fr 45px 42px;
    grid-template-rows: 36px 36px 146px 41px;
    gap: 5px 7px;
    align-content: start;
    margin: 1px 3px 0 16px;
}

.party .folder {
    width: auto;
}

.party .title {
    grid-row: 2;
    justify-self: start;
    width: 160px;
    padding-top: 5px;
}

.party textarea,
.referente {
    grid-column: 1 / 3;
    grid-row: 3;
}

.party textarea {
    padding: 5px 4px;
    resize: none;
}

.open-heading {
    grid-column: 3;
    grid-row: 3;
}

.open-contact {
    grid-column: 3;
    grid-row: 4;
}

.referente {
    grid-row: 4;
    display: flex;
    gap: 12px;
    align-items: center;
}

.referente .plain {
    flex: 1;
    height: 41px;
}

/* marker ring around the customer name */
.highlight {
    position: absolute;
    top: -25px;
    left: -30px;
    width: 310px;
    height: 89px;
    border: 10px solid #ed4026;
    border-radius: 24px;
}

/* document lines */
.lines {
    display: flex;
    gap: 8px;
    margin-top: 8px;
}

.grid {
    flex: 1;
    min-width: 0;
    min-height: 316px;
    border: 2px solid #c8c8cc;
    background-color: #ababab;
}

.grid table {
    table-layout: fixed;
    width: 1479px;
    border-collapse: collapse;
}

.c-mark { width: 37px; }
.c-cod { width: 158px; }
.c-desc { width: 397px; }
.c-um { width: 65px; }
.c-qta { width: 105px; }
.c-fatt { width: 106px; }
.c-val { width: 79px; }
.c-prezzo { width: 119px; }
.c-imp { width: 132px; }
.c-ndoc { width: 134px; }
.c-data { width: 147px; }

.grid th,
.grid td {
    height: 32px;
    padding: 0 5px;
    border: 2px solid #c8c8cc;
    text-align: left;
}

.grid th {
    background-color: #e0e0e0;
    border-top: 0;
}

.grid th:first-child,
.grid .empty td {
    background-color: #f0f0f0;
}

.grid .empty td:first-child {
    background-color: #e0e0e0;
}

.grid .light {
    font-weight: normal;
}

.grid .mid {
    text-align: center;
}

.grid .right {
    text-align: right;
}

.grid td {
    background-color: #fff;
}

.grid tbody td {
    border-top: 0;
    border-bottom: 0;
}

.grid .mark {
    background-color: #bdf0ee;
}

.mark::before {
    content: "";
    display: block;
    margin-left: 10px;
    border: 9px solid transparent;
    border-left: 10px solid #000;
    border-right: 0;
}

.grid .cell-active {
    outline: 2px dotted #222;
    outline-offset: -3px;
}

.cell-active a {
    color: #1a1aff;
}

.side {
    display: flex;
    flex-direction: column;
    gap: 10px;
    width: 37px;
}

.side .raised {
    height: 41px;
}

.side .spaced {
    margin-top: 9px;
}

.side svg {
    width: 29px;
    height: 29px;
}

.flip {
    transform: rotate(180deg);
}

/* actions and totals */
.bottom {
    display: grid;
    grid-template-columns: minmax(0, 1199fr) minmax(0, 666fr);
    margin-top: 11px;
}

.actions {
    display: flex;
}

.vtabs {
    display: flex;
    flex-direction: column;
    width: 41px;
}

.vtabs a {
    flex: 1;
    display: flex;
    align-items: center;
    justify-content: center;
    width: 41px;
    border: 2px solid #777;
    border-radius: 8px 0 0 8px;
    box-shadow: inset 3px 3px 0 #fff;
}

.vtabs .active {
    border-right: 0;
    border-bottom: 4px solid #999;
    font-weight: bold;
}

.vtabs span {
    writing-mode: vertical-rl;
    transform: rotate(180deg);
}

.buttons {
    flex: 1;
    display: grid;
    grid-template-columns: repeat(4, minmax(0, 1fr));
    gap: 8px;
    padding: 14px 10px 13px;
    border: 2px solid #777;
    border-left: 0;
    box-shadow: inset -3px -4px 0 #a0a0a0, inset 0 4px 0 #fff;
}

.buttons .raised {
    justify-content: flex-start;
    height: 65px;
    padding-left: 4px;
}

.buttons svg {
    flex: none;
    width: 44px;
    height: 44px;
    margin-bottom: 4px;
}

.buttons span {
    flex: 1;
    padding: 2px 0 0 8px;
    text-align: center;
    white-space: nowrap;
}

.totals {
    display: flex;
    flex-direction: column;
    gap: 3px;
    padding-top: 4px;
}

.total {
    display: flex;
    gap: 3px;
    height: 33px;
}

.total label {
    flex: 0 0 257px;
    padding-top: 4px;
    text-align: right;
}

.amount {
    width: 171px;
    padding-right: 2px;
    text-align: right;
}

.strong {
    font-weight: bold;
}

.unit {
    width: 81px;
}

.vat {
    width: 176px;
}

.total .folder {
    margin-left: 4px;
}

.weights {
    display: flex;
    gap: 8px;
    margin: 19px 60px 0 0;
    justify-content: flex-end;
}

.weights label {
    padding-top: 5px;
}

.weights .plain {
    width: 127px;
    height: 38px;
    text-align: right;
}

/* window status bar */
.status {
    display: flex;
    gap: 4px;
    margin: 0 5px 6px;
    padding-top: 2px;
    background-color: #dcdcdc;
    font-size: 22px;
    font-weight: bold;
}

.status span {
    height: 46px;
    padding: 11px 0 0;
    border: 2px solid #c6c6c8;
    text-align: center;
    white-space: nowrap;
}

.s-created {
    flex: 627;
}

.s-firm {
    flex: 467;
}

.s-app {
    flex: 468;
}

.s-date {
    flex: 180;
}

.s-time {
    flex: 115;
}

.grip {
    width: 20px;
    height: 20px;
    margin: 18px 12px 0 5px;
}
```
